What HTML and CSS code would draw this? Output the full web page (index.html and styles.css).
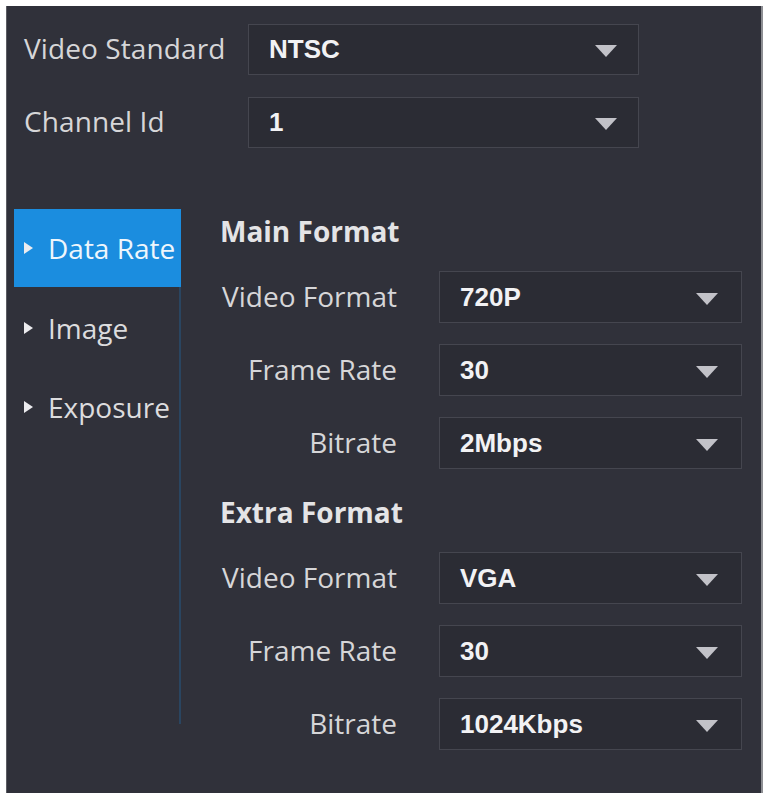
FILE: index.html
```html
<!DOCTYPE html>
<html lang="en">
<head>
    <meta charset="UTF-8">
    <meta name="viewport" content="width=device-width, initial-scale=1.0">
    <title>Video Settings</title>
    <link rel="stylesheet" href="styles.css">
</head>
<body>
    <div class="panel">
        <!-- channel selection -->
        <div class="top-fields">
            <div class="field-row">
                <span class="top-label">Video Standard</span>
                <div class="select top-select">
                    <span class="value">NTSC</span>
                    <span class="caret"></span>
                </div>
            </div>
            <div class="field-row">
                <span class="top-label">Channel Id</span>
                <div class="select top-select">
                    <span class="value">1</span>
                    <span class="caret"></span>
                </div>
            </div>
        </div>

        <div class="settings">
            <!-- left menu -->
            <ul class="side-nav">
                <li class="nav-item active"><span class="arrow"></span>Data Rate</li>
                <li class="nav-item"><span class="arrow"></span>Image</li>
                <li class="nav-item"><span class="arrow"></span>Exposure</li>
            </ul>

            <!-- stream formats -->
            <div class="format-list">
                <div class="format-group">
                    <h3>Main Format</h3>
                    <div class="form-row">
                        <label>Video Format</label>
                        <div class="select"><span class="value">720P</span><span class="caret"></span></div>
                    </div>
                    <div class="form-row">
                        <label>Frame Rate</label>
                        <div class="select"><span class="value">30</span><span class="caret"></span></div>
                    </div>
                    <div class="form-row">
                        <label>Bitrate</label>
                        <div class="select"><span class="value">2Mbps</span><span class="caret"></span></div>
                    </div>
                </div>
                <div class="format-group">
                    <h3>Extra Format</h3>
                    <div class="form-row">
                        <label>Video Format</label>
                        <div class="select"><span class="value">VGA</span><span class="caret"></span></div>
                    </div>
                    <div class="form-row">
                        <label>Frame Rate</label>
                        <div class="select"><span class="value">30</span><span class="caret"></span></div>
                    </div>
                    <div class="form-row">
                        <label>Bitrate</label>
                        <div class="select"><span class="value">1024Kbps</span><span class="caret"></span></div>
                    </div>
                </div>
            </div>
        </div>
    </div>
</body>
</html>
```

FILE: styles.css
```css
* {
    box-sizing: border-box;
}

body {
    margin: 0;
    background: #ffffff;
    font-family: 'Open Sans', 'Noto Sans', sans-serif;
}

.panel {
    margin: 6px 4px 0 6px;
    height: 787px;
    background: #30313a;
    border-left: 1px solid #5c5d63;
    border-right: 2px solid #8d8e93;
    padding: 18px 0 0 7px;
}

.top-fields {
    padding-left: 10px;
}

.field-row {
    display: flex;
    align-items: center;
    height: 51px;
    margin-bottom: 22px;
}

.top-label {
    width: 224px;
    font-size: 28px;
    letter-spacing: 0.1px;
    color: #d6d6d8;
    margin-top: -3px;
}

.select {
    display: flex;
    align-items: center;
    justify-content: space-between;
    width: 303px;
    height: 52px;
    padding: 0 23px 0 20px;
    background: #2b2c34;
    border: 1px solid #45464f;
}

.top-select {
    width: 391px;
    height: 51px;
    padding-right: 21px;
}

.value {
    font-family: 'Liberation Sans', Arial, sans-serif;
    font-weight: bold;
    font-size: 26px;
    color: #f2f2f4;
}

.caret {
    width: 0;
    height: 0;
    border-left: 11px solid transparent;
    border-right: 11px solid transparent;
    border-top: 12px solid #c2c2c8;
    margin-top: 3px;
}

.settings {
    display: flex;
    margin-top: 61px;
}

.side-nav {
    list-style: none;
    margin: 0;
    padding: 0;
    width: 167px;
    height: 515px;
    border-right: 2px solid #2a4560;
}

.nav-item {
    display: flex;
    align-items: center;
    gap: 15px;
    height: 79px;
    padding-left: 10px;
    font-size: 28px;
    color: #dcdcde;
}

.nav-item.active {
    height: 78px;
    margin-right: -2px;
    margin-bottom: 1px;
    background: #1b8ddf;
    color: #eef6fc;
}

.arrow {
    width: 0;
    height: 0;
    border-top: 6px solid transparent;
    border-bottom: 6px solid transparent;
    border-left: 9px solid #ececef;
}

.format-list {
    margin-left: 39px;
}

.format-group h3 {
    margin: 0 0 16px;
    height: 46px;
    line-height: 44px;
    font-size: 28px;
    font-weight: bold;
    color: #e4e4e6;
}

.form-row {
    display: flex;
    align-items: center;
    gap: 42px;
    margin-bottom: 21px;
}

.form-row label {
    width: 177px;
    text-align: right;
    font-size: 28px;
    color: #d6d6d8;
    margin-top: -3px;
}
```
